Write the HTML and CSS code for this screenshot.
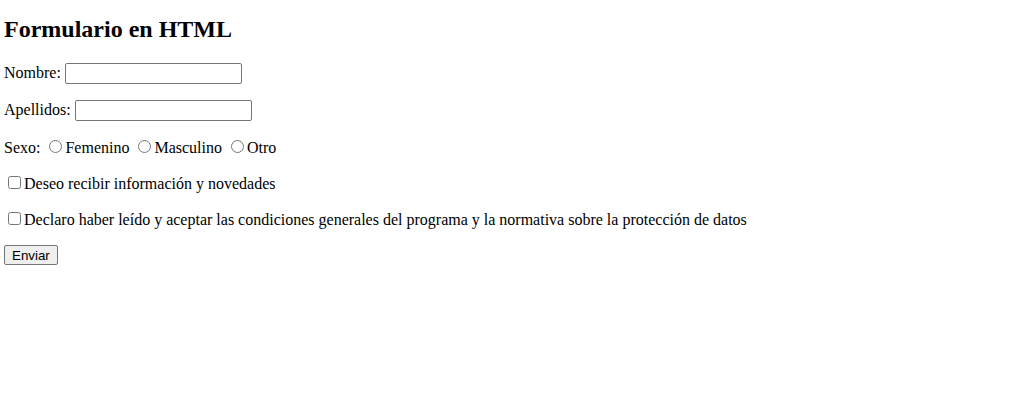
FILE: index.html
```html
<!DOCTYPE html>
<html lang="es">
<head>
<meta charset="utf-8">
<title>Formulario en HTML</title>
<link rel="stylesheet" href="styles.css">
</head>
<body class="page">
<h2 class="title">Formulario en HTML</h2>
<form class="form">
<p class="row">Nombre: <input class="text" type="text" name="nombre"></p>
<p class="row">Apellidos: <input class="text" type="text" name="apellidos"></p>
<p class="row">Sexo: <input class="radio" type="radio" name="sexo" value="f">Femenino <input class="radio" type="radio" name="sexo" value="m">Masculino <input class="radio" type="radio" name="sexo" value="o">Otro</p>
<p class="row"><input class="check" type="checkbox" name="info">Deseo recibir información y novedades</p>
<p class="row"><input class="check" type="checkbox" name="legal">Declaro haber leído y aceptar las condiciones generales del programa y la normativa sobre la protección de datos</p>
<p class="row"><input class="btn" type="submit" value="Enviar"></p>
</form>
</body>
</html>
```
FILE: styles.css
```css
html, body {
  background: #ffffff;
}
.page {
  margin: 0 4px;
  padding-top: 1px;
  font-family: "Liberation Serif", "Times New Roman", serif;
  font-size: 16px;
  color: #000000;
}
.title {
  font-size: 24px;
  font-weight: bold;
  margin: 15px 0 20px;
}
.form {
  margin: 0;
}
.row {
  margin: 16px 0;
}
.text {
  box-sizing: border-box;
  width: 177px;
  height: 21px;
  padding: 1px 2px;
  border: 1px solid #767676;
  border-radius: 2px;
  font-family: "Liberation Sans", Arial, sans-serif;
  font-size: 13.33px;
  background: #ffffff;
}
.radio {
  margin: 3px 3px 0 5px;
}
.check {
  margin: 3px 3px 3px 4px;
}
.btn {
  box-sizing: border-box;
  height: 20px;
  font-family: "Liberation Sans", Arial, sans-serif;
  font-size: 13.33px;
  padding: 1px 7px;
  border: 1px solid #767676;
  border-radius: 2px;
  background: #efefef;
  color: #000000;
}
```
